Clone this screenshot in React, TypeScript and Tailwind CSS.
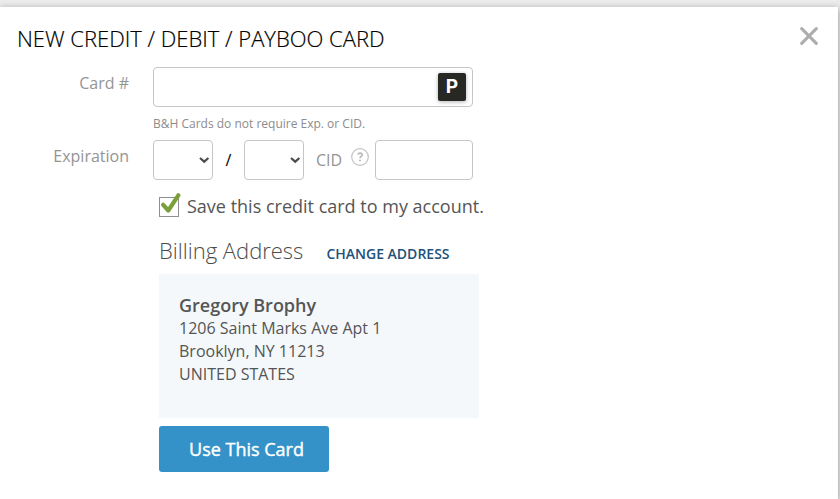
import { useState } from "react";
import type { ReactNode } from "react";

const address = ["1206 Saint Marks Ave Apt 1", "Brooklyn, NY 11213", "UNITED STATES"];

const FieldLabel = ({ children }: { children: ReactNode }) => (
  <div className="w-[129px] shrink-0 pt-1 text-right text-[16px] leading-6 text-[#949494]">{children}</div>
);

const DateSelect = ({ label }: { label: string }) => (
  <button
    aria-label={label}
    className="flex h-10 w-[60px] items-center justify-end rounded border border-[#c6c6c6] bg-white pr-[2px]"
  >
    <svg width="11" height="8" viewBox="0 0 11 8" fill="none">
      <path d="M1 2 L5.2 5.7 L9.4 2" stroke="#4c4c4c" strokeWidth="2.2" />
    </svg>
  </button>
);

const PaybooBadge = () => (
  <div className="flex h-7 w-7 items-center justify-center rounded-[2px] bg-[#272723] shadow-[0_1px_4px_rgba(0,0,0,0.3)]">
    <span className="font-['Inter',sans-serif] text-[19px] leading-7 font-bold text-white">P</span>
  </div>
);

export default function App() {
  const [saveCard, setSaveCard] = useState(true);

  return (
    <div className="h-[499px] w-[840px] overflow-hidden bg-[#ebebeb] pt-[7px] font-['Open_Sans',sans-serif]">
      <div className="h-[492px] w-[838px] bg-white shadow-[0_2px_7px_rgba(0,0,0,0.4)]">
        {/* Header */}
        <header className="flex h-[60px] items-start justify-between pl-[17px]">
          <h1 className="pt-4 text-[22px] leading-[30px] font-light whitespace-nowrap text-black [-webkit-text-stroke:0.2px]">
            NEW CREDIT / DEBIT / PAYBOO CARD
          </h1>
          <button aria-label="Close" className="mt-5 mr-5">
            <svg width="18" height="18" viewBox="0 0 18 18" fill="none">
              <path d="M1.7 1.7 L16.3 16.3 M16.3 1.7 L1.7 16.3" stroke="#adadad" strokeWidth="3.1" strokeLinecap="round" />
            </svg>
          </button>
        </header>

        {/* Card number */}
        <div className="flex gap-6">
          <FieldLabel>Card #</FieldLabel>
          <div>
            <div className="flex h-10 w-[320px] items-center justify-end rounded border border-[#c6c6c6] pr-[6px]">
              <PaybooBadge />
            </div>
            <p className="mt-2 h-[25px] text-[12px] leading-[18px] text-[#8c8c8c]">
              B&amp;H Cards do not require Exp. or CID.
            </p>
          </div>
        </div>

        {/* Expiration and CID */}
        <div className="flex gap-6">
          <FieldLabel>Expiration</FieldLabel>
          <div className="flex items-center">
            <DateSelect label="Month" />
            <span className="w-[31px] text-center text-[16px] text-black">/</span>
            <DateSelect label="Year" />
            <span className="ml-3 w-[35px] text-[16px] text-[#949494]">CID</span>
            <svg className="-mt-[6px]" width="18" height="18" viewBox="0 0 18 18" fill="none">
              <circle cx="9" cy="9" r="8.3" stroke="#c2c2c2" strokeWidth="1.2" />
              <path d="M6.8 6.4 C7.4 4.6 11.2 4.6 11.2 6.8 C11.2 8.4 9 8.3 9 10.2" stroke="#b8b8b8" strokeWidth="1.6" />
              <circle cx="9" cy="12.6" r="1" fill="#b8b8b8" />
            </svg>
            <div className="ml-[6px] h-10 w-[98px] rounded border border-[#c6c6c6]" />
          </div>
        </div>

        <div className="pl-[159px]">
          <button
            className="mt-2 flex h-9 items-center gap-[6px]"
            role="checkbox"
            aria-checked={saveCard}
            onClick={() => setSaveCard(!saveCard)}
          >
            <svg className="-mt-[3px]" width="22" height="25" viewBox="0 0 22 25" fill="none">
              <rect x="0.5" y="5.5" width="19" height="19" stroke="#8f8f8f" />
              {saveCard && (
                <path d="M4.2 12.8 L9.3 18.5 L19.3 3.3" stroke="#7a9f3b" strokeWidth="4.2" strokeLinecap="round" strokeLinejoin="round" />
              )}
            </svg>
            <span className="text-[18px] leading-6 whitespace-nowrap text-[#555555]">
              Save this credit card to my account.
            </span>
          </button>

          {/* Billing address */}
          <div className="mt-2 flex h-[42px] items-baseline">
            <h2 className="text-[22px] leading-9 font-light whitespace-nowrap text-[#4c4c4c]">Billing Address</h2>
            <a href="#" className="ml-[23px] text-[14px] font-semibold whitespace-nowrap text-[#22527a]">
              CHANGE ADDRESS
            </a>
          </div>
          <div className="h-36 w-[320px] bg-[#f4f8fb] px-5 pt-5 text-[16px] leading-[23px] text-[#555555]">
            <p className="text-[18px] font-semibold">Gregory Brophy</p>
            {address.map((line) => (
              <p key={line}>{line}</p>
            ))}
          </div>

          <button className="mt-2 h-[46px] w-[170px] rounded-[3px] bg-[#3492c9] pl-[5px] text-[18px] font-medium text-white [-webkit-text-stroke:0.4px]">
            Use This Card
          </button>
        </div>
      </div>
    </div>
  );
}
